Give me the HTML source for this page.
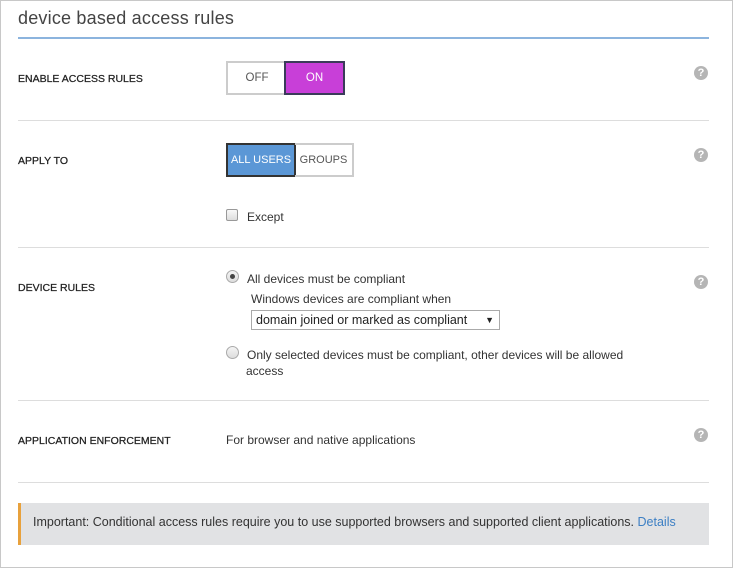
<!DOCTYPE html>
<html><head><style>
body{margin:0;width:733px;height:568px;position:relative;font-family:"Liberation Sans",sans-serif;color:#333;overflow:hidden;background:#fff}
.frame{position:absolute;left:0;top:0;width:731px;height:566px;border:1px solid #c8c8c8}
.a{position:absolute;white-space:nowrap}
.lbl{font-size:10.5px;color:#222;-webkit-text-stroke:0.25px #222}
.sep{position:absolute;left:18px;width:691px;height:1px;background:#ddd}
.help{position:absolute;left:694px;width:14px;height:14px;border-radius:50%;background:#b5b5b5;color:#fff;font-size:11px;font-weight:bold;text-align:center;line-height:14px}
.btn{position:absolute;box-sizing:border-box;font-size:11.5px;text-align:center;display:flex;align-items:center;justify-content:center}
.t{font-size:12px;color:#333}
.radio{position:absolute;width:11px;height:11px;border-radius:50%;border:1px solid #aaa;background:linear-gradient(#f4f4f4,#ddd)}
</style></head><body>
<div class="frame"></div>
<div class="a" style="left:18px;top:8px;font-size:18px;color:#444;letter-spacing:0.2px">device based access rules</div>
<div class="a" style="left:18px;top:37px;width:691px;height:2px;background:#8cb4de"></div>

<div class="a lbl" style="left:18px;top:73px">ENABLE ACCESS RULES</div>
<div class="btn" style="left:226px;top:61px;width:60px;height:34px;border:2px solid #ccc;border-right:none;color:#555">OFF</div>
<div class="btn" style="left:284px;top:61px;width:61px;height:34px;border:2px solid #3b3b5a;background:#c83fd8;color:#fff">ON</div>
<div class="help" style="top:66px">?</div>
<div class="sep" style="top:120px"></div>

<div class="a lbl" style="left:18px;top:155px">APPLY TO</div>
<div class="btn" style="left:226px;top:143px;width:70px;height:34px;border:2px solid #333;background:#5b97d6;color:#fff;font-size:11px">ALL USERS</div>
<div class="btn" style="left:295px;top:143px;width:59px;height:34px;border:2px solid #ccc;border-left:none;color:#555;font-size:11px">GROUPS</div>
<div class="help" style="top:148px">?</div>
<div class="a" style="left:226px;top:209px;width:10px;height:10px;border:1px solid #999;border-radius:2px;background:linear-gradient(#f8f8f8,#ddd)"></div>
<div class="a t" style="left:247px;top:210px">Except</div>
<div class="sep" style="top:247px"></div>

<div class="a lbl" style="left:18px;top:282px">DEVICE RULES</div>
<div class="radio" style="left:226px;top:270px"><div style="position:absolute;left:3px;top:3px;width:5px;height:5px;border-radius:50%;background:#444"></div></div>
<div class="a t" style="left:247px;top:272px">All devices must be compliant</div>
<div class="a t" style="left:251px;top:292px">Windows devices are compliant when</div>
<div class="a" style="left:251px;top:310px;width:249px;height:20px;border:1px solid #aaa;box-sizing:border-box;font-size:12.5px;color:#222;padding-left:4px;line-height:18px">domain joined or marked as compliant<span style="position:absolute;right:5px;font-size:9px">▼</span></div>
<div class="radio" style="left:226px;top:346px"></div>
<div class="a t" style="left:247px;top:348px">Only selected devices must be compliant, other devices will be allowed</div>
<div class="a t" style="left:246px;top:364px">access</div>
<div class="help" style="top:275px">?</div>
<div class="sep" style="top:400px"></div>

<div class="a lbl" style="left:18px;top:435px">APPLICATION ENFORCEMENT</div>
<div class="a t" style="left:226px;top:433px">For browser and native applications</div>
<div class="help" style="top:428px">?</div>
<div class="sep" style="top:482px"></div>

<div class="a" style="left:18px;top:503px;width:691px;height:42px;background:#e1e2e4;border-left:3px solid #e8a13c;box-sizing:border-box"></div>
<div class="a" style="left:33px;top:515px;font-size:12.5px;color:#333">Important: Conditional access rules require you to use supported browsers and supported client applications. <span style="color:#3c7fc4">Details</span></div>
</body></html>
